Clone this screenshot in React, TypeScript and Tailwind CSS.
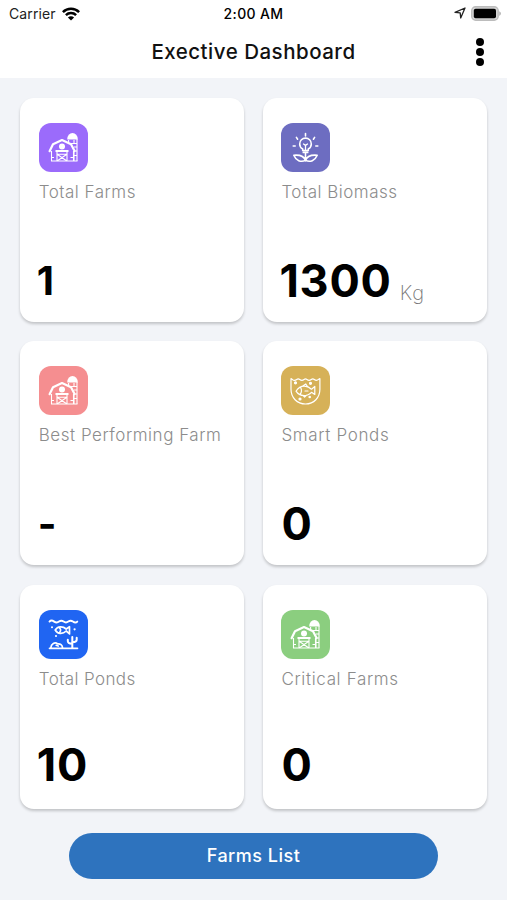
import type { ReactNode } from 'react';

function BarnIcon() {
  return (
    <svg viewBox="0 0 49 49" className="size-full" fill="none" stroke="#fff" strokeWidth="1.1">
      <path d="M28.2 16.5a5.3 6.6 0 0 1 10.6 0z" fill="#fff" stroke="none" />
      <path d="M29.6 17v4M38 16v22M35 24h3M35 28h3M35 32.5h3M30 20.5h8M35 17v4M35 28v10" />
      <path d="M12.5 28v10H38.5M34.5 28v10" />
      <path d="M10.6 28.2 14 21.2 23 17l9 4.2 3.6 6.8" strokeWidth="2.2" strokeLinejoin="round" strokeLinecap="round" />
      <circle cx="23" cy="23.4" r="3" fill="#fff" stroke="none" />
      <path d="M16.5 27.9h13" strokeWidth="2" />
      <path d="M18 29v9M28 29v9M18 31.3h10M18.5 31.5l9 6.3M27.5 31.5l-9 6.3M12.5 34.5H15M31.5 34.5h3" />
    </svg>
  );
}

function BulbIcon() {
  return (
    <svg viewBox="0 0 49 49" className="size-full" fill="none" stroke="#fff" strokeWidth="1.6" strokeLinecap="round" strokeLinejoin="round">
      <path d="M24.5 10.5v2.4M15.4 14.4l1.2 1.8M33.6 14.4l-1.2 1.8M12.2 23h2M34.8 23h2" />
      <path d="M21.7 27.6v-1.7c-1.8-1-3-2.8-3-5a5.8 5.8 0 0 1 11.6 0c0 2.2-1.2 4-3 5v1.7z" />
      <path d="M22.4 29.4h4.2" strokeWidth="1.8" />
      <path d="M22.5 21l2 1.4 2-1.4M24.5 22.4V27" strokeWidth="1.3" />
      <path d="M24.5 30.5v7.5M24.5 37.4c-1.3-4-5-5.8-11.7-5.2 2.2 5.4 7 7.4 11.7 5.2zM24.5 37.4c1.3-4 5-5.8 11.7-5.2-2.2 5.4-7 7.4-11.7 5.2z" />
    </svg>
  );
}

function BowlIcon() {
  return (
    <svg viewBox="0 0 49 49" className="size-full" fill="none" stroke="#fff" strokeWidth="1.2" strokeLinecap="round" strokeLinejoin="round">
      <path d="M10 12.7c1.2 0 1.4 1.7 3.5 1.7s2.2-1.5 3.7-1.5 1.7 1.5 3.7 1.5 2.2-1.5 3.6-1.5 1.6 1.5 3.6 1.5 2.2-1.5 3.7-1.5 1.6 1.5 3.6 1.5 2.2-1.7 3.5-1.7v10.6C38.9 31.5 33 38 24.5 38S10 31.5 10 23.3z" />
      <path d="M15 25.2c2.3-3.6 5-5 8.3-5 3 0 5.3 1.3 7.2 3l3.3-2.7v8l-3.3-2.2c-2.2 2.4-4.6 3.3-7.6 3.3-3.6 0-6-1.5-7.9-4.4zM19.5 21.3c1.5 2.6 1.3 5-.5 7.3M21.8 20l3-2 2 3M22 29.6l1.6 1.5 1.8-1.7M24 25h3" />
      <circle cx="14.5" cy="16.8" r="1" fill="#fff" />
      <circle cx="29.5" cy="17.3" r="1" fill="#fff" />
      <circle cx="19" cy="33" r="1" fill="#fff" />
      <circle cx="28.7" cy="31" r=".7" fill="#fff" />
    </svg>
  );
}

function PondIcon() {
  return (
    <svg viewBox="0 0 49 49" className="size-full" fill="none" stroke="#fff" strokeWidth="1.7" strokeLinecap="round" strokeLinejoin="round">
      <path d="M10.5 11.6c1-1.2 3-1.2 4.7 0s3.2 1.2 4.8 0 3-1.2 4.6 0 3.1 1.2 4.7 0 3-1.2 4.6 0 3.3 1.2 4.4 0" strokeWidth="1.9" />
      <path d="M16.2 20c2.4-4 7.5-4.2 11-1l3.3-2.3v7.2L27.2 21c-3.5 3.4-8.6 3.1-11-1zM20.5 17.8c1.5 1.4 1.5 3.2 0 4.7" />
      <path d="M10.5 38.3h28M11.8 37.8c.3-4.2 4.1-6.1 7-3.9 2.6-.4 4.4 1.3 4.8 3.9M17.2 35.3l2 .7" />
      <path d="M33.3 38V27M28.8 29.8v1.3c0 2 1 2.7 4.3 2.7M37.7 27.7v2.1c0 1.8-1.3 2.4-4.2 2.4" strokeWidth="2" />
      <circle cx="13" cy="17.3" r="1" fill="#fff" stroke="none" />
      <circle cx="35.6" cy="19.3" r="1.1" fill="#fff" stroke="none" />
      <circle cx="17" cy="26" r="1.1" fill="#fff" stroke="none" />
    </svg>
  );
}

type CardProps = {
  color: string;
  icon: ReactNode;
  label: string;
  labelClass: string;
  value: string;
  valueClass: string;
  unit?: string;
};

function StatCard({ color, icon, label, labelClass, value, valueClass, unit }: CardProps) {
  return (
    <section className="flex h-56 flex-col rounded-[14px] bg-white pl-[18.4px] pt-[25px] shadow-[0_2px_3px_rgba(0,0,0,0.2)]">
      <div className={`size-[49px] shrink-0 overflow-hidden rounded-[12px] ${color}`}>{icon}</div>
      <h2 className={`mt-[9px] whitespace-nowrap text-[17px] font-light leading-[22px] text-[#8c8c8c] ${labelClass}`}>{label}</h2>
      <div className="mt-auto flex h-[68px] items-start whitespace-nowrap">
        <span className={`font-bold text-black ${valueClass}`}>{value}</span>
        {unit && <span className="ml-[8px] mt-[27px] text-[20px] font-extralight leading-6 tracking-[0.9px] text-[#777]">{unit}</span>}
      </div>
    </section>
  );
}

const cards: CardProps[] = [
  { color: 'bg-[#9b6bfb]', icon: <BarnIcon />, label: 'Total Farms', labelClass: 'tracking-[0.5px]', value: '1', valueClass: 'text-[40px] leading-[54px] -ml-[2px]' },
  { color: 'bg-[#6d6dc1]', icon: <BulbIcon />, label: 'Total Biomass', labelClass: 'tracking-[0.5px]', value: '1300', valueClass: 'text-[45px] leading-[54px] -ml-[2px] tracking-[0.8px]', unit: 'Kg' },
  { color: 'bg-[#f58e90]', icon: <BarnIcon />, label: 'Best Performing Farm', labelClass: 'tracking-[0.53px]', value: '-', valueClass: 'text-[40px] leading-[54px] -ml-[1px]' },
  { color: 'bg-[#d6b158]', icon: <BowlIcon />, label: 'Smart Ponds', labelClass: 'tracking-[0.65px]', value: '0', valueClass: 'text-[45px] leading-[54px]' },
  { color: 'bg-[#2065f2]', icon: <PondIcon />, label: 'Total Ponds', labelClass: 'tracking-[0.4px]', value: '10', valueClass: 'text-[45px] leading-[48px] -ml-[2px] tracking-[0.9px]' },
  { color: 'bg-[#8bce7f]', icon: <BarnIcon />, label: 'Critical Farms', labelClass: 'tracking-[0.65px]', value: '0', valueClass: 'text-[45px] leading-[48px]' },
];

function StatusBar() {
  return (
    <div className="grid h-7 grid-cols-3 items-center text-[14px] text-[#222]">
      <div className="flex items-center gap-[6px] pb-px pl-[9px]">
        <span className="tracking-[0.1px]">Carrier</span>
        <svg viewBox="0 0 18 14" className="h-[14px] w-[18px]" fill="none" stroke="#000" strokeWidth="2.5">
          <path d="M.9 5.1c4.5-4.5 11.7-4.5 16.2 0M3.9 8.2c2.8-2.8 7.4-2.8 10.2 0" />
          <path d="M5.9 10.4c1.7-1.7 4.5-1.7 6.2 0L9 13.6z" fill="#000" stroke="none" />
        </svg>
      </div>
      <span className="pb-px text-center font-medium tracking-[0.35px] text-black">2:00 AM</span>
      <div className="flex items-center justify-end gap-[5px] pb-[2px] pr-[6px]">
        <svg viewBox="0 0 12 12" className="size-3" fill="none" stroke="#222" strokeWidth="1.3" strokeLinejoin="round">
          <path d="M1 5.4 11 1 6.7 11 6.2 5.9z" />
        </svg>
        <svg viewBox="0 0 30 15" className="h-[15px] w-[30px]">
          <rect x=".7" y=".7" width="26.5" height="13.6" rx="4" fill="#d5d5d5" stroke="#bcbcbc" strokeWidth="1.4" />
          <rect x="2.8" y="2.8" width="22.2" height="9.4" rx="1.8" fill="#000" />
          <path d="M28.3 5.2c2 .8 2 3.8 0 4.6z" fill="#aaa" />
        </svg>
      </div>
    </div>
  );
}

export default function App() {
  return (
    <main className="flex h-[900px] w-[507px] flex-col overflow-hidden bg-[#f2f4f8] font-['Inter','Liberation_Sans',sans-serif]">
      <header className="h-[78px] shrink-0 bg-white">
        <StatusBar />
        <div className="grid h-[50px] grid-cols-[60px_1fr_60px] items-center">
          <span />
          <h1 className="whitespace-nowrap pb-[2px] text-center text-[20.5px] font-medium tracking-[0.5px] text-[#111]">Exective Dashboard</h1>
          <button aria-label="More options" className="flex flex-col items-center gap-[2px] pl-[6px] pb-[2px]">
            <span className="size-2 rounded-full bg-black" />
            <span className="size-2 rounded-full bg-black" />
            <span className="size-2 rounded-full bg-black" />
          </button>
        </div>
      </header>
      <div className="grid grid-cols-2 gap-x-[19px] gap-y-[19.3px] px-[20.4px] pt-5">
        {cards.map((card) => (
          <StatCard key={card.label} {...card} />
        ))}
      </div>
      <button className="mx-[69px] mt-6 h-[46px] shrink-0 rounded-full bg-[#2e73be] text-[18px] font-medium tracking-[0.5px] text-white">Farms List</button>
    </main>
  );
}
